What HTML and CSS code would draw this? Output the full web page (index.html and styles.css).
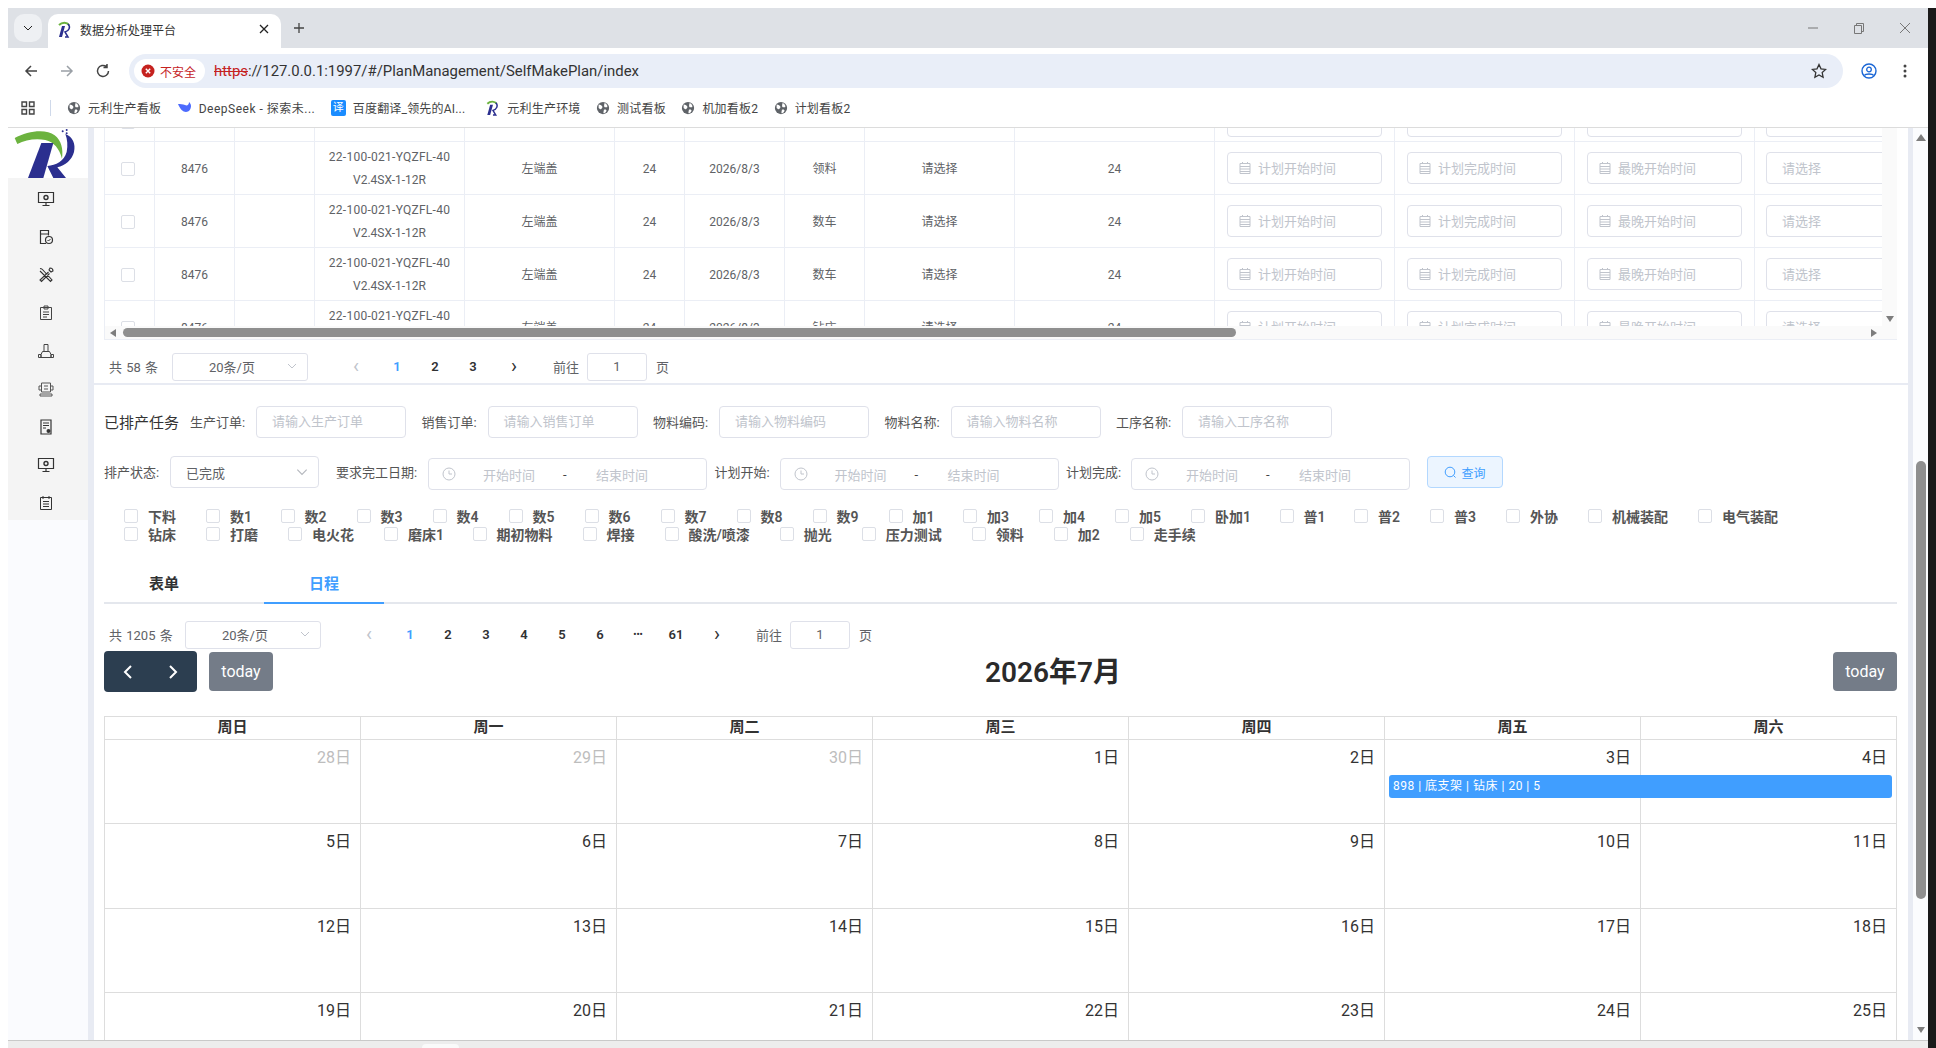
FILE: index.html
```html
<!DOCTYPE html>
<html lang="zh-CN">
<head>
  <meta charset="UTF-8" />
  <title>数据分析处理平台</title>
  <link rel="stylesheet" href="styles.css">
</head>
<body>
  <svg class="defs" aria-hidden="true">
    <symbol id="logo" viewBox="0 0 240 150">
      <path d="M20 30C60 8 115 2 140 22c20 16 26 40 22 70-8-30-24-50-50-56-30-6-60 0-84 12z" fill="#6cb33f"/>
      <path d="M100 45h36L106 150H60z" fill="#2b2f8f"/>
      <path d="M172 18c22 8 32 30 26 54-6 24-26 40-50 46l26 32h-38l-18-36c26-2 50-14 58-42 4-20 2-38-4-54z" fill="#2b2f8f"/>
      <circle cx="164" cy="10" r="3" fill="#2b2f8f"/><circle cx="176" cy="6" r="3" fill="#2b2f8f"/><circle cx="176" cy="16" r="3" fill="#2b2f8f"/>
    </symbol>
    <symbol id="globe" viewBox="0 0 16 16">
      <circle cx="8" cy="8" r="7" fill="#5f6368"/>
      <path d="M3 4c2 0 3 1 4 2s0 2-1 3-2 0-3-1zM10 2c1 1 3 2 3 4s-2 1-3 1-1-3 0-5zM9 10c2-1 3 0 3 1s-2 3-3 3 0-3 0-4z" fill="#fff"/>
    </symbol>
    <symbol id="cal" viewBox="0 0 14 14">
      <path d="M2 2.500h10v10H2zM2 5.500h10M2 8h10M2 10.500h10M4.500 1v2M9.500 1v2" fill="none" stroke="currentColor"/>
    </symbol>
    <symbol id="clock" viewBox="0 0 14 14">
      <circle cx="7" cy="7" r="6" fill="none" stroke="currentColor"/>
      <path d="M7 3.500V7h3" fill="none" stroke="currentColor"/>
    </symbol>
    <symbol id="screen" viewBox="0 0 18 18">
      <path d="M1.500 2.500h15v10h-15zM9 12.500v3M5.500 15.500h7" fill="none" stroke="#333" stroke-width="1.200"/>
      <circle cx="9" cy="7.500" r="2" fill="none" stroke="#333" stroke-width="1.400"/>
    </symbol>
    <symbol id="down" viewBox="0 0 12 12">
      <path d="M2 4l4 4 4-4" fill="none" stroke="currentColor"/>
    </symbol>
  </svg>

  <div class="window">
    <div class="tabstrip">
      <div class="tab-list"><svg width="12" height="12"><use href="#down"/></svg></div>
      <div class="tab">
        <svg class="favicon" width="15" height="17" viewBox="0 0 15 17"><path d="M2 4c3-3 8-3 10 0" fill="none" stroke="#6cb33f" stroke-width="2"/><path d="M5 5h3L5 16H2z" fill="#2b2f8f"/><path d="M11 3c3 3 1 7-3 8l3 5H8" fill="none" stroke="#2b2f8f" stroke-width="1.500"/></svg>
        <span class="tab-title">数据分析处理平台</span>
        <svg class="tab-close" width="10" height="10" viewBox="0 0 10 10"><path d="M1 1l8 8M9 1l-8 8" stroke="#222" stroke-width="1.300"/></svg>
      </div>
      <svg class="tab-new" width="12" height="12" viewBox="0 0 12 12"><path d="M6 1v10M1 6h10" stroke="#444" stroke-width="1.300"/></svg>
      <div class="win-btns">
        <svg width="12" height="12" viewBox="0 0 12 12"><path d="M1 6h10" stroke="#777"/></svg>
        <svg width="12" height="12" viewBox="0 0 12 12"><path d="M1.500 3.500h7v8h-7zM3.500 3.500v-2h7v8h-2" fill="none" stroke="#777"/></svg>
        <svg width="12" height="12" viewBox="0 0 12 12"><path d="M1 1l10 10M11 1L1 11" stroke="#777"/></svg>
      </div>
    </div>

    <div class="toolbar">
      <svg class="nav-icon" width="16" height="16" viewBox="0 0 16 16"><path d="M14 8H3M8 3L3 8l5 5" fill="none" stroke="#444" stroke-width="1.500"/></svg>
      <svg class="nav-icon" width="16" height="16" viewBox="0 0 16 16"><path d="M2 8h11M8 3l5 5-5 5" fill="none" stroke="#9aa0a6" stroke-width="1.500"/></svg>
      <svg class="nav-icon" width="16" height="16" viewBox="0 0 16 16"><path d="M13.500 8A5.500 5.500 0 1 1 11.500 3.700M12 1v3.500H8.500" fill="none" stroke="#444" stroke-width="1.500"/></svg>
      <div class="address">
        <div class="insecure">
          <svg width="14" height="14" viewBox="0 0 14 14"><circle cx="7" cy="7" r="6.500" fill="#c5221f"/><path d="M4.800 4.800l4.400 4.400M9.200 4.800L4.800 9.200" stroke="#fff" stroke-width="1.400"/></svg>
          <span>不安全</span>
        </div>
        <div class="url"><s>https</s>://127.0.0.1:1997/#/PlanManagement/SelfMakePlan/index</div>
        <svg class="star" width="16" height="16" viewBox="0 0 16 16"><path d="M8 1.500l2 4.300 4.700.6-3.500 3.200.9 4.700L8 12l-4.100 2.300.9-4.700-3.500-3.200 4.700-.6z" fill="none" stroke="#333" stroke-width="1.300"/></svg>
      </div>
      <svg class="profile" width="16" height="18" viewBox="0 0 16 16"><circle cx="8" cy="8" r="7" fill="none" stroke="#1a66d6" stroke-width="1.400"/><circle cx="8" cy="6.500" r="2.300" fill="none" stroke="#1a66d6" stroke-width="1.300"/><path d="M3.500 12.500c1-2 8-2 9 0" fill="none" stroke="#1a66d6" stroke-width="1.300"/></svg>
      <svg class="dots" width="4" height="14" viewBox="0 0 4 14"><circle cx="2" cy="2" r="1.500" fill="#444"/><circle cx="2" cy="7" r="1.500" fill="#444"/><circle cx="2" cy="12" r="1.500" fill="#444"/></svg>
    </div>

    <div class="bookmarks">
      <svg class="apps" width="14" height="14" viewBox="0 0 14 14"><path d="M1 1h4.500v4.500H1zM8.500 1H13v4.500H8.500zM1 8.500h4.500V13H1zM8.500 8.500H13V13H8.500z" fill="none" stroke="#444" stroke-width="1.400"/></svg>
      <i class="bm-sep"></i>
      <a class="bm"><svg width="14" height="14"><use href="#globe"/></svg>元利生产看板</a>
      <a class="bm bm-wide"><svg width="15" height="14" viewBox="0 0 15 14"><path d="M1 3c2 5 5 8 8 8 3 0 5-3 5-6 0-2-1-3-2-4 0 3-2 4-4 3C6 3 3 3 1 3z" fill="#4d6bfe"/></svg>DeepSeek - 探索未...</a>
      <a class="bm bm-gap"><span class="bm-fanyi">译</span>百度翻译_领先的AI...</a>
      <a class="bm"><svg width="15" height="16" viewBox="0 0 15 17"><path d="M2 4c3-3 8-3 10 0" fill="none" stroke="#6cb33f" stroke-width="2"/><path d="M5 5h3L5 16H2z" fill="#2b2f8f"/><path d="M11 3c3 3 1 7-3 8l3 5H8" fill="none" stroke="#2b2f8f" stroke-width="1.500"/></svg>元利生产环境</a>
      <a class="bm"><svg width="14" height="14"><use href="#globe"/></svg>测试看板</a>
      <a class="bm"><svg width="14" height="14"><use href="#globe"/></svg>机加看板2</a>
      <a class="bm"><svg width="14" height="14"><use href="#globe"/></svg>计划看板2</a>
    </div>

    <div class="content">
      <aside class="sidebar">
        <div class="side-logo"><svg width="80" height="50"><use href="#logo"/></svg></div>
        <div class="side-menu">
          <svg width="18" height="18"><use href="#screen"/></svg>
          <svg width="18" height="18" viewBox="0 0 18 18"><path d="M9 15.500H3.500v-13h8v5" fill="none" stroke="#333" stroke-width="1.200"/><path d="M3.500 6h8" stroke="#333"/><circle cx="12" cy="12" r="3.500" fill="none" stroke="#333" stroke-width="1.200"/><path d="M10.500 12l1 1 2-2" fill="none" stroke="#333"/></svg>
          <svg width="18" height="18" viewBox="0 0 18 18"><path d="M5 3l10 11-1.500 1.500L3 5M3 2.500l2 .5M13 2c2 0 3 1 3 3l-2 1-1-1-1-1zM11.500 6L3 14l1.500 1.500L12.500 7.500" fill="none" stroke="#333" stroke-width="1.100"/></svg>
          <svg width="18" height="18" viewBox="0 0 18 18"><path d="M3.500 3.500h11v12h-11zM7 2h4v3H7zM6 8h6M6 10.500h6M6 13h4" fill="none" stroke="#444"/></svg>
          <svg width="18" height="18" viewBox="0 0 18 18"><path d="M7 2.500h4v7H7zM5.500 9.500h7l1.500 3v3H4v-3zM1.500 12.500H4v3H1.500zM14 12.500h2.500v3H14z" fill="none" stroke="#444"/></svg>
          <svg width="18" height="18" viewBox="0 0 18 18"><path d="M4.500 3h9v9h-9zM2 6h2.500v4H2zM13.500 6H16v4h-2.500zM3 14h12v2H3zM7 6h4M7 9h4" fill="none" stroke="#555"/></svg>
          <svg width="18" height="18" viewBox="0 0 18 18"><path d="M4 2h10v14H4z" fill="none" stroke="#333" stroke-width="1.200"/><path d="M6 5h6M6 7.500h6M6 10h3" stroke="#333"/><circle cx="11.500" cy="13" r="2" fill="#333"/></svg>
          <svg width="18" height="18"><use href="#screen"/></svg>
          <svg width="18" height="18" viewBox="0 0 18 18"><path d="M3.500 3.500h11v12h-11zM6 2v3M12 2v3M6 7.500h6M6 10h6M6 12.500h6" fill="none" stroke="#333"/></svg>
        </div>
      </aside>

      <main class="main">
        <section class="card card-top">
          <div class="table-box">
            <div class="table-row">
              <div class="table-clip">
                <table class="grid">
                  <colgroup>
                    <col class="w50"><col class="w80"><col class="w80"><col class="w150"><col class="w150"><col class="w70"><col class="w100"><col class="w80"><col class="w150"><col class="w200"><col class="w180"><col class="w180"><col class="w180"><col class="w150">
                  </colgroup>
                  <tbody>
                    <tr class="row-top">
                      <td><i class="ck-box"></i></td><td></td><td></td><td></td><td></td><td></td><td></td><td></td><td></td><td></td>
                      <td><div class="cell-input"></div></td><td><div class="cell-input"></div></td><td><div class="cell-input"></div></td><td><div class="cell-select"></div></td>
                    </tr>
                    <tr>
                      <td><i class="ck-box"></i></td><td>8476</td><td></td><td><span class="code">22-100-021-YQZFL-40</span><br>V2.4SX-1-12R</td><td>左端盖</td><td>24</td><td>2026/8/3</td><td>领料</td><td>请选择</td><td>24</td>
                      <td><div class="cell-input"><svg width="14" height="14"><use href="#cal"/></svg>计划开始时间</div></td><td><div class="cell-input"><svg width="14" height="14"><use href="#cal"/></svg>计划完成时间</div></td><td><div class="cell-input"><svg width="14" height="14"><use href="#cal"/></svg>最晚开始时间</div></td><td><div class="cell-select">请选择</div></td>
                    </tr>
                    <tr>
                      <td><i class="ck-box"></i></td><td>8476</td><td></td><td><span class="code">22-100-021-YQZFL-40</span><br>V2.4SX-1-12R</td><td>左端盖</td><td>24</td><td>2026/8/3</td><td>数车</td><td>请选择</td><td>24</td>
                      <td><div class="cell-input"><svg width="14" height="14"><use href="#cal"/></svg>计划开始时间</div></td><td><div class="cell-input"><svg width="14" height="14"><use href="#cal"/></svg>计划完成时间</div></td><td><div class="cell-input"><svg width="14" height="14"><use href="#cal"/></svg>最晚开始时间</div></td><td><div class="cell-select">请选择</div></td>
                    </tr>
                    <tr>
                      <td><i class="ck-box"></i></td><td>8476</td><td></td><td><span class="code">22-100-021-YQZFL-40</span><br>V2.4SX-1-12R</td><td>左端盖</td><td>24</td><td>2026/8/3</td><td>数车</td><td>请选择</td><td>24</td>
                      <td><div class="cell-input"><svg width="14" height="14"><use href="#cal"/></svg>计划开始时间</div></td><td><div class="cell-input"><svg width="14" height="14"><use href="#cal"/></svg>计划完成时间</div></td><td><div class="cell-input"><svg width="14" height="14"><use href="#cal"/></svg>最晚开始时间</div></td><td><div class="cell-select">请选择</div></td>
                    </tr>
                    <tr>
                      <td><i class="ck-box"></i></td><td>8476</td><td></td><td><span class="code">22-100-021-YQZFL-40</span><br>V2.4SX-1-12R</td><td>左端盖</td><td>24</td><td>2026/8/3</td><td>钻床</td><td>请选择</td><td>24</td>
                      <td><div class="cell-input"><svg width="14" height="14"><use href="#cal"/></svg>计划开始时间</div></td><td><div class="cell-input"><svg width="14" height="14"><use href="#cal"/></svg>计划完成时间</div></td><td><div class="cell-input"><svg width="14" height="14"><use href="#cal"/></svg>最晚开始时间</div></td><td><div class="cell-select">请选择</div></td>
                    </tr>
                  </tbody>
                </table>
              </div>
              <div class="table-gutter"><i class="arrow arrow-down"></i></div>
            </div>
            <div class="hbar">
              <i class="arrow arrow-left"></i>
              <i class="hbar-thumb"></i>
              <i class="arrow arrow-right"></i>
            </div>
          </div>

          <div class="pager">
            <span class="pg-total">共 58 条</span>
            <div class="pg-size">20条/页<svg width="12" height="12"><use href="#down"/></svg></div>
            <span class="pg-btn pg-arrow">‹</span>
            <span class="pg-btn active">1</span><span class="pg-btn">2</span><span class="pg-btn">3</span>
            <span class="pg-btn pg-arrow dark">›</span>
            <span class="pg-jump">前往</span>
            <div class="pg-input">1</div>
            <span class="pg-unit">页</span>
          </div>
        </section>

        <section class="card card-bottom">
          <div class="form-row">
            <span class="form-title">已排产任务</span>
            <span class="label">生产订单:</span><div class="input">请输入生产订单</div>
            <span class="label">销售订单:</span><div class="input">请输入销售订单</div>
            <span class="label">物料编码:</span><div class="input">请输入物料编码</div>
            <span class="label">物料名称:</span><div class="input">请输入物料名称</div>
            <span class="label">工序名称:</span><div class="input">请输入工序名称</div>
          </div>

          <div class="form-row form-row2">
            <span class="label first">排产状态:</span>
            <div class="select">已完成<svg width="14" height="14" viewBox="0 0 12 12"><path d="M2 4l4 4 4-4" fill="none" stroke="#b4b7bd"/></svg></div>
            <span class="label wide">要求完工日期:</span>
            <div class="range"><svg width="14" height="14"><use href="#clock"/></svg><span class="r-start">开始时间</span><b>-</b><span class="r-end">结束时间</span></div>
            <span class="label tight">计划开始:</span>
            <div class="range"><svg width="14" height="14"><use href="#clock"/></svg><span class="r-start">开始时间</span><b>-</b><span class="r-end">结束时间</span></div>
            <span class="label tight">计划完成:</span>
            <div class="range"><svg width="14" height="14"><use href="#clock"/></svg><span class="r-start">开始时间</span><b>-</b><span class="r-end">结束时间</span></div>
            <button class="search"><svg width="13" height="13" viewBox="0 0 13 13"><circle cx="6" cy="6" r="4.800" fill="none" stroke="#409eff"/><path d="M9.500 9.500l2 2" stroke="#409eff"/></svg>查询</button>
          </div>

          <div class="checks">
            <div class="check-row">
              <label class="ck"><i class="ck-box"></i>下料</label><label class="ck n1"><i class="ck-box"></i>数1</label><label class="ck"><i class="ck-box"></i>数2</label><label class="ck"><i class="ck-box"></i>数3</label><label class="ck"><i class="ck-box"></i>数4</label><label class="ck"><i class="ck-box"></i>数5</label><label class="ck"><i class="ck-box"></i>数6</label><label class="ck"><i class="ck-box"></i>数7</label><label class="ck"><i class="ck-box"></i>数8</label><label class="ck"><i class="ck-box"></i>数9</label><label class="ck n1"><i class="ck-box"></i>加1</label><label class="ck"><i class="ck-box"></i>加3</label><label class="ck"><i class="ck-box"></i>加4</label><label class="ck"><i class="ck-box"></i>加5</label><label class="ck n1"><i class="ck-box"></i>卧加1</label><label class="ck n1"><i class="ck-box"></i>普1</label><label class="ck"><i class="ck-box"></i>普2</label><label class="ck"><i class="ck-box"></i>普3</label><label class="ck"><i class="ck-box"></i>外协</label><label class="ck"><i class="ck-box"></i>机械装配</label><label class="ck"><i class="ck-box"></i>电气装配</label>
            </div>
            <div class="check-row">
              <label class="ck"><i class="ck-box"></i>钻床</label><label class="ck"><i class="ck-box"></i>打磨</label><label class="ck"><i class="ck-box"></i>电火花</label><label class="ck n1"><i class="ck-box"></i>磨床1</label><label class="ck"><i class="ck-box"></i>期初物料</label><label class="ck"><i class="ck-box"></i>焊接</label><label class="ck"><i class="ck-box"></i>酸洗/喷漆</label><label class="ck"><i class="ck-box"></i>抛光</label><label class="ck"><i class="ck-box"></i>压力测试</label><label class="ck"><i class="ck-box"></i>领料</label><label class="ck"><i class="ck-box"></i>加2</label><label class="ck"><i class="ck-box"></i>走手续</label>
            </div>
          </div>

          <div class="tabs">
            <span class="tab-item">表单</span>
            <span class="tab-item active">日程</span>
          </div>

          <div class="pager pager2">
            <span class="pg-total">共 1205 条</span>
            <div class="pg-size">20条/页<svg width="12" height="12"><use href="#down"/></svg></div>
            <span class="pg-btn pg-arrow">‹</span>
            <span class="pg-btn active">1</span><span class="pg-btn">2</span><span class="pg-btn">3</span><span class="pg-btn">4</span><span class="pg-btn">5</span><span class="pg-btn">6</span><span class="pg-btn pg-more">•••</span><span class="pg-btn">61</span>
            <span class="pg-btn pg-arrow dark">›</span>
            <span class="pg-jump">前往</span>
            <div class="pg-input">1</div>
            <span class="pg-unit">页</span>
          </div>

          <div class="cal-toolbar">
            <div class="cal-left">
              <div class="cal-nav">
                <svg width="14" height="16" viewBox="0 0 14 16"><path d="M10 2L4 8l6 6" fill="none" stroke="#fff" stroke-width="2"/></svg>
                <svg width="14" height="16" viewBox="0 0 14 16"><path d="M4 2l6 6-6 6" fill="none" stroke="#fff" stroke-width="2"/></svg>
              </div>
              <button class="cal-today">today</button>
            </div>
            <h2 class="cal-title">2026年7月</h2>
            <button class="cal-today">today</button>
          </div>

          <div class="calendar">
            <div class="cal-head">周日</div><div class="cal-head">周一</div><div class="cal-head">周二</div><div class="cal-head">周三</div><div class="cal-head">周四</div><div class="cal-head">周五</div><div class="cal-head">周六</div>
            <div class="day muted">28日</div><div class="day muted">29日</div><div class="day muted">30日</div><div class="day">1日</div><div class="day">2日</div>
            <div class="day">3日<div class="event">898 | 底支架 | 钻床 | 20 | 5</div></div><div class="day">4日</div>
            <div class="day">5日</div><div class="day">6日</div><div class="day">7日</div><div class="day">8日</div><div class="day">9日</div><div class="day">10日</div><div class="day">11日</div>
            <div class="day">12日</div><div class="day">13日</div><div class="day">14日</div><div class="day">15日</div><div class="day">16日</div><div class="day">17日</div><div class="day">18日</div>
            <div class="day">19日</div><div class="day">20日</div><div class="day">21日</div><div class="day">22日</div><div class="day">23日</div><div class="day">24日</div><div class="day">25日</div>
          </div>
        </section>
      </main>

      <div class="page-scroll">
        <i class="arrow arrow-up"></i>
        <i class="page-thumb"></i>
        <i class="arrow arrow-down page-down"></i>
      </div>
    </div>

    <div class="statusbar"><i class="status-tab"></i></div>
  </div>
  <div class="edge"></div>
</body>
</html>
```

FILE: styles.css
```css
* { box-sizing: border-box; }

html, body { height: 100%; }

body {
  margin: 0;
  padding: 8px 0 0 8px;
  display: flex;
  overflow: hidden;
  background: #fff;
  font-family: Roboto, "Noto Sans CJK SC", sans-serif;
  font-size: 12px;
  color: #606266;
}

.defs { display: none; }

.window {
  width: 1920px;
  height: 1040px;
  display: flex;
  flex-direction: column;
  background: #fff;
}

.edge { width: 8px; background: #1a1a1a; }

/* browser chrome */
.tabstrip {
  height: 40px;
  flex: none;
  display: flex;
  align-items: flex-end;
  padding-left: 6px;
  background: #dee1e6;
}

.tab-list {
  width: 28px;
  height: 28px;
  margin-bottom: 6px;
  display: flex;
  align-items: center;
  justify-content: center;
  background: #eef0f3;
  border-radius: 10px;
  color: #222;
}

.tab {
  width: 233px;
  height: 34px;
  margin-left: 6px;
  padding: 0 12px 4px 9px;
  display: flex;
  align-items: center;
  background: #fff;
  border-radius: 10px 10px 0 0;
}

.tab-title { margin-left: 8px; color: #333; font-size: 12px; flex: 1; }

.tab-new { margin: 0 0 14px 12px; }

.win-btns {
  margin-left: auto;
  margin-bottom: 14px;
  padding-right: 17px;
  display: flex;
  gap: 34px;
}

.toolbar {
  height: 46px;
  flex: none;
  display: flex;
  align-items: center;
  padding-left: 15px;
  background: #fff;
  border-radius: 8px 8px 0 0;
}

.nav-icon { margin-right: 20px; }

.address {
  width: 1714px;
  height: 34px;
  margin-left: -2px;
  padding: 0 16px 0 5px;
  display: flex;
  align-items: center;
  background: #e9eef8;
  border-radius: 17px;
}

.insecure {
  width: 71px;
  height: 24px;
  padding-left: 7px;
  display: flex;
  align-items: center;
  gap: 5px;
  background: #fff;
  border-radius: 12px;
  color: #c5221f;
  font-size: 12px;
}

.url { margin-left: 9px; flex: 1; font-size: 14.900px; color: #333; }
.url s { color: #c5221f; }

.profile { margin-left: 18px; }
.dots { margin-left: 26px; }

.bookmarks {
  height: 34px;
  flex: none;
  display: flex;
  align-items: center;
  padding: 0 0 6px 13px;
  border-bottom: 1px solid #dcdcdc;
  font-size: 12px;
  letter-spacing: .2px;
  color: #444;
}

.bm-sep { width: 1px; height: 16px; margin: 0 16px 0 15px; background: #cfd9ea; }

.bm {
  display: flex;
  align-items: center;
  gap: 7px;
  margin-right: 15.500px;
}

.bm-wide { letter-spacing: .5px; }
.bm-gap { margin-right: 20px; }

.bm-fanyi {
  width: 15px;
  height: 16px;
  background: #1a8cff;
  border-radius: 2px;
  color: #fff;
  font-size: 11px;
  line-height: 16px;
  text-align: center;
}

/* page */
.content {
  flex: 1;
  min-height: 0;
  display: flex;
  overflow: hidden;
  background: #fafbfe;
}

.sidebar { width: 80px; flex: none; }

.side-logo { height: 50px; background: #fff; overflow: hidden; }
.side-logo svg { display: block; }

.side-menu {
  height: 342px;
  padding: 12px 4px 0 0;
  display: flex;
  flex-direction: column;
  align-items: center;
  gap: 20px;
  background: #f4f4f4;
}

.main {
  width: 1825px;
  flex: none;
  padding: 0 5px 0 6px;
  background: #e8ebf3;
}

.card { background: #fff; padding: 0 11px 0 10px; }

.card-top { height: 255px; margin-bottom: 2px; }

.table-box {
  border-left: 1px solid #ebeef5;
  border-bottom: 1px solid #ebeef5;
}

.table-row { display: flex; height: 198px; }

.table-clip { width: 1777px; overflow: hidden; }

.grid {
  width: 1800px;
  margin-top: -39px;
  table-layout: fixed;
  border-collapse: separate;
  border-spacing: 0;
  text-align: center;
}

.grid td {
  height: 53px;
  padding: 2px 0 0;
  border-right: 1px solid #ebeef5;
  border-bottom: 1px solid #ebeef5;
  line-height: 23px;
}

.grid td:first-child { padding-right: 4px; }

.grid .row-top td { padding-top: 14px; }

.code { letter-spacing: .27px; }

.w50 { width: 50px; }
.w70 { width: 70px; }
.w80 { width: 80px; }
.w100 { width: 100px; }
.w150 { width: 150px; }
.w180 { width: 180px; }
.w200 { width: 200px; }

.cell-input, .cell-select {
  height: 32px;
  margin-bottom: 2px;
  display: flex;
  align-items: center;
  border: 1px solid #dfe1ea;
  border-radius: 4px;
  color: #c0c4cc;
  font-size: 13px;
}

.cell-input {
  width: 155px;
  margin-left: 12px;
  padding-left: 10px;
  gap: 6px;
}

.cell-select { width: 150px; margin-left: 11px; padding-left: 15px; }

.ck-box {
  display: inline-block;
  width: 14px;
  height: 14px;
  flex: none;
  border: 1px solid #dcdfe6;
  border-radius: 2px;
  background: #fff;
  vertical-align: middle;
}

.table-gutter {
  width: 15px;
  padding: 0 0 4px 4px;
  display: flex;
  align-items: flex-end;
  background: #fafafa;
}

.arrow { display: block; width: 0; height: 0; border-style: solid; border-color: transparent; }
.arrow-down { border-width: 6px 4px 0; border-top-color: #7d7d7d; }
.arrow-up { border-width: 0 5px 7px; border-bottom-color: #7d7d7d; }
.arrow-left { border-width: 4px 6px 4px 0; border-right-color: #7d7d7d; }
.arrow-right { border-width: 4px 0 4px 6px; border-left-color: #7d7d7d; }

.hbar {
  height: 13px;
  padding-left: 5px;
  display: flex;
  align-items: center;
  background: #fafafa;
}

.hbar-thumb {
  width: 1113px;
  height: 9px;
  margin-left: 7px;
  background: #8f8f8f;
  border-radius: 5px;
}

.hbar .arrow-right { margin-left: 635px; }

.pager {
  height: 28px;
  margin-top: 13px;
  padding-left: 5px;
  display: flex;
  align-items: center;
  font-size: 13px;
}

.pg-total { width: 63px; flex: none; margin-bottom: 2px; white-space: nowrap; word-spacing: 1px; }
.pager2 .pg-total { width: 76px; }

.pg-size {
  width: 136px;
  height: 28px;
  padding: 0 9px 2px 36px;
  display: flex;
  align-items: center;
  justify-content: space-between;
  border: 1px solid #dfe1ea;
  border-radius: 3px;
  color: #606266;
}

.pg-size svg { color: #c0c4cc; }

.pg-btn {
  width: 38px;
  margin-bottom: 2px;
  text-align: center;
  font-weight: 600;
  color: #303133;
}

.pg-btn.active { color: #409eff; }

.pg-more { font-size: 9px; }

.pg-arrow { font-size: 20px; font-weight: 400; color: #c0c4cc; margin-right: 3px; }
.pg-arrow.dark { color: #303133; margin-right: 0; margin-left: 3px; }
.pg-size + .pg-arrow { margin-left: 29px; }

.pg-jump { margin-left: 20px; margin-bottom: 2px; }

.pg-input {
  width: 60px;
  height: 28px;
  margin-left: 8px;
  border: 1px solid #dfe1ea;
  border-radius: 3px;
  line-height: 25px;
  text-align: center;
}

.pg-unit { margin-left: 9px; margin-bottom: 2px; }

.card-bottom { height: 700px; padding-top: 21px; }

.form-row {
  height: 32px;
  display: flex;
  align-items: center;
  font-size: 13px;
}

.form-title {
  width: 75px;
  margin-right: 11px;
  margin-bottom: 2px;
  font-size: 15px;
  color: #333;
}

.label { width: 55px; flex: none; margin-right: 11px; margin-bottom: 2px; white-space: nowrap; color: #555; }
.input + .label { margin-left: 15.500px; }
.label.wide { width: 81px; margin-left: 17px; }
.label.tight { margin-left: 7.500px; margin-right: 10px; }

.input {
  width: 150px;
  height: 32px;
  padding-left: 15px;
  border: 1px solid #dfe1ea;
  border-radius: 4px;
  color: #c0c4cc;
  line-height: 30px;
}

.form-row2 { margin-top: 18px; }

.select {
  width: 149px;
  height: 32px;
  padding: 0 9px 0 15px;
  display: flex;
  align-items: center;
  justify-content: space-between;
  border: 1px solid #dfe1ea;
  border-radius: 4px;
  color: #606266;
}

.range {
  width: 279px;
  height: 32px;
  margin-top: 4px;
  padding-left: 13px;
  display: flex;
  align-items: center;
  border: 1px solid #dfe1ea;
  border-radius: 4px;
  color: #c0c4cc;
}

.r-start { width: 52px; margin-left: 27px; white-space: nowrap; }
.range b { width: 6px; margin-left: 28px; font-weight: 400; color: #444; }
.r-end { margin-left: 27px; white-space: nowrap; }

.search {
  width: 76px;
  height: 32px;
  margin-left: 17px;
  padding: 0;
  display: flex;
  align-items: center;
  justify-content: center;
  gap: 4px;
  background: #ecf5ff;
  border: 1px solid #b3d8ff;
  border-radius: 4px;
  color: #409eff;
  font: inherit;
  font-size: 12px;
}

.checks { margin-top: 19px; padding-left: 20px; }

.check-row { height: 18px; display: flex; align-items: center; }

.ck {
  display: inline-flex;
  align-items: center;
  gap: 10px;
  margin-right: 30px;
  font-size: 14px;
  font-weight: 600;
  color: #555;
}

.ck.n1 { margin-right: 28.500px; }

.tabs {
  height: 40px;
  margin-top: 21px;
  display: flex;
  gap: 40px;
  border-bottom: 2px solid #e4e7ed;
}

.tab-item {
  width: 120px;
  height: 40px;
  text-align: center;
  font-size: 15px;
  font-weight: 600;
  line-height: 40px;
  color: #303133;
}

.tab-item.active { color: #409eff; border-bottom: 2px solid #409eff; }

.pager2 { margin-top: 17px; }

.cal-toolbar {
  height: 41px;
  margin-top: 2px;
  display: flex;
  align-items: center;
  justify-content: space-between;
}

.cal-left { display: flex; align-items: center; gap: 12px; }

.cal-nav {
  width: 93px;
  height: 41px;
  padding: 0 17px;
  display: flex;
  align-items: center;
  justify-content: space-between;
  background: #2c3e50;
  border-radius: 4px;
}

.cal-today {
  width: 64px;
  height: 39px;
  padding: 0;
  border: 0;
  background: #747c88;
  border-radius: 4px;
  color: #fff;
  font: inherit;
  font-size: 16px;
}

.cal-title {
  margin: 0 0 4px;
  font-size: 28px;
  font-weight: 600;
  color: #2a2a2a;
}

.calendar {
  margin-top: 24px;
  display: grid;
  grid-template-columns: repeat(7, 1fr);
  grid-auto-rows: 84.500px;
  grid-template-rows: 22.500px;
  border-top: 1px solid #ddd;
  border-left: 1px solid #ddd;
  color: #333;
}

.cal-head {
  border-right: 1px solid #ddd;
  border-bottom: 1px solid #ddd;
  font-size: 15px;
  font-weight: 600;
  line-height: 21px;
  text-align: center;
}

.day {
  position: relative;
  padding: 6px 9px 0 0;
  border-right: 1px solid #ddd;
  border-bottom: 1px solid #ddd;
  font-size: 16px;
  line-height: 24px;
  text-align: right;
}

.day.muted { color: #bdbdbd; }

.event {
  position: absolute;
  z-index: 1;
  top: 35px;
  left: 4px;
  width: 503px;
  height: 23px;
  padding-left: 4px;
  background: #409eff;
  border-radius: 3px;
  color: #fff;
  font-size: 12px;
  letter-spacing: .5px;
  line-height: 23px;
  text-align: left;
}

.page-scroll {
  width: 15px;
  flex: none;
  padding-top: 6px;
  display: flex;
  flex-direction: column;
  align-items: center;
  background: #fbfcfe;
}

.page-thumb {
  display: block;
  width: 10px;
  height: 438px;
  margin-top: 320px;
  background: #8f8f8f;
  border-radius: 5px;
}

.page-down { margin-top: 128px; }

.statusbar {
  height: 8px;
  flex: none;
  position: relative;
  background: #ededed;
  border-top: 1px solid #c9c9c9;
}

.status-tab {
  position: absolute;
  left: 414px;
  top: 3px;
  width: 37px;
  height: 5px;
  background: #fafafa;
  border-radius: 4px 4px 0 0;
}
```
